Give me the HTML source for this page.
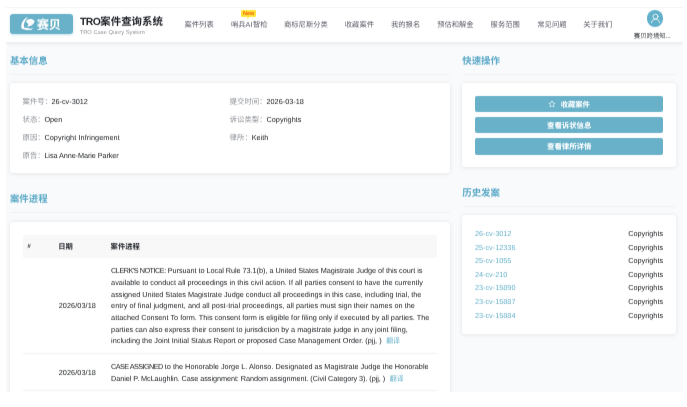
<!DOCTYPE html>
<html lang="zh-CN"><head><meta charset="utf-8"><title>TRO案件查询系统</title>
<style>
html,body{margin:0;padding:0;background:#fff;}
body{text-rendering:geometricPrecision;width:687px;height:407px;position:relative;overflow:hidden;font-family:"Liberation Sans","Noto Sans CJK SC",sans-serif;}
#app{position:absolute;left:6px;top:7px;width:677px;height:385px;overflow:hidden;background:#f9fafc}
#g{position:absolute;left:-6px;top:-7px;width:687px;height:407px;will-change:transform;filter:url(#soft)}
#g>div,#g>svg{position:absolute}
.t{white-space:pre}
.cj{display:inline-block;position:relative;vertical-align:baseline;line-height:1;white-space:nowrap;font-family:"Liberation Sans","Noto Sans CJK SC",sans-serif}
.b{font-weight:bold}
</style></head><body>
<svg width="0" height="0" style="position:absolute;left:0;top:0"><defs><filter id="soft" x="0" y="0" width="100%" height="100%" color-interpolation-filters="sRGB"><feConvolveMatrix order="1 3" kernelMatrix="0.11 0.78 0.11" edgeMode="duplicate" preserveAlpha="false"/></filter></defs></svg>
<div id="app"><div id="g">
<div style="left:6px;top:7px;width:677px;height:34.5px;background:#fff;box-shadow:0 1px 4px rgba(0,21,41,.10);"></div>
<div style="left:6px;top:7px;width:677px;height:1px;background:#f3f4f5"></div>
<div style="left:10.3px;top:13.8px;width:63px;height:20.7px;background:#68b1c9;border-radius:3.2px;box-shadow:0 1px 3px rgba(104,177,201,.35)"></div>
<svg style="left:21.4px;top:16.7px" width="13.6" height="13.8" viewBox="0 0 136 138"><g fill="#fff"><path d="M72 0C40 8 8 44 3 84c-2 16 2 28 10 36l26-6C27 100 25 80 33 60 41 38 55 16 72 0z"/><path d="M50 42c18-28 62-30 86-2-6 34-40 58-78 54 11-7 16-17 14-30-9-2-17-10-22-22z"/><path d="M1 114c28-12 58-8 82 0 14 5 26 3 35-6-3 20-26 32-52 26-22-5-42-16-65-20z"/></g></svg>
<div class="t" style="top:14.85px;font-size:12.2px;line-height:20px;height:20px;color:#fff;left:36.7px;"><span class="cj b" style="width:25.00px;height:12.2px;font-size:12.2px">赛贝</span></div>
<div class="t" style="top:16.00px;font-size:10.45px;line-height:14px;height:14px;color:#1f2329;font-weight:bold;left:80.1px;"><span style="letter-spacing:-0.62px">TRO</span><span class="cj b" style="width:63.00px;height:10.45px;font-size:10.45px">案件查询系统</span></div>
<div class="t" style="top:29.00px;font-size:5.75px;line-height:8px;height:8px;color:#8f9399;left:79.7px;">TRO Case Query System</div>
<div class="t" style="top:19.30px;font-size:7.3px;line-height:12px;height:12px;color:#5a5e66;left:184.5px;"><span class="cj" style="width:29.20px;height:7.3px;font-size:7.3px">案件列表</span></div>
<div class="t" style="top:19.30px;font-size:7.3px;line-height:12px;height:12px;color:#5a5e66;left:230.9px;"><span class="cj" style="width:14.60px;height:7.3px;font-size:7.3px">哨兵</span><span style="letter-spacing:.25px">AI</span><span class="cj" style="width:14.60px;height:7.3px;font-size:7.3px">智检</span></div>
<div class="t" style="top:19.30px;font-size:7.3px;line-height:12px;height:12px;color:#5a5e66;left:284px;"><span class="cj" style="width:43.80px;height:7.3px;font-size:7.3px">商标尼斯分类</span></div>
<div class="t" style="top:19.30px;font-size:7.3px;line-height:12px;height:12px;color:#5a5e66;left:344.8px;"><span class="cj" style="width:29.20px;height:7.3px;font-size:7.3px">收藏案件</span></div>
<div class="t" style="top:19.30px;font-size:7.3px;line-height:12px;height:12px;color:#5a5e66;left:391px;"><span class="cj" style="width:29.20px;height:7.3px;font-size:7.3px">我的报名</span></div>
<div class="t" style="top:19.30px;font-size:7.3px;line-height:12px;height:12px;color:#5a5e66;left:437.2px;"><span class="cj" style="width:36.50px;height:7.3px;font-size:7.3px">预估和解金</span></div>
<div class="t" style="top:19.30px;font-size:7.3px;line-height:12px;height:12px;color:#5a5e66;left:490.6px;"><span class="cj" style="width:29.20px;height:7.3px;font-size:7.3px">服务范围</span></div>
<div class="t" style="top:19.30px;font-size:7.3px;line-height:12px;height:12px;color:#5a5e66;left:537.3px;"><span class="cj" style="width:29.20px;height:7.3px;font-size:7.3px">常见问题</span></div>
<div class="t" style="top:19.30px;font-size:7.3px;line-height:12px;height:12px;color:#5a5e66;left:583.2px;"><span class="cj" style="width:29.20px;height:7.3px;font-size:7.3px">关于我们</span></div>
<div style="left:241px;top:10px;width:15.3px;height:7.3px;background:#ffe53b;border-radius:1px"></div>
<div style="left:246.6px;top:17px;width:0;height:0;border-left:1.8px solid transparent;border-right:1.8px solid transparent;border-top:2.2px solid #ffe53b"></div>
<div class="t" style="top:10.00px;font-size:5.6px;line-height:8px;height:8px;color:#f4620c;font-weight:bold;left:98.69999999999999px;width:300px;text-align:center;">New</div>
<div style="left:646.6px;top:10.1px;width:16.9px;height:16.9px;border-radius:50%;background:#62b0ca"></div>
<svg style="left:646.6px;top:10.1px" width="16.9" height="16.9" viewBox="0 0 169 169"><g fill="none" stroke="#fff" stroke-width="8" stroke-linecap="round"><circle cx="85" cy="66" r="25"/><path d="M44 128c4-24 20-37 41-37s37 13 41 37"/></g></svg>
<div class="t" style="top:31.60px;font-size:6.4px;line-height:9px;height:9px;color:#3a3d42;left:633.8px;"><span class="cj" style="width:32.00px;height:6.4px;font-size:6.4px">赛贝跨境知</span><span style="letter-spacing:-0.2px">...</span></div>
<div class="t" style="top:54.24px;font-size:9.45px;line-height:15px;height:15px;color:#5fabc8;left:9.9px;"><span class="cj b" style="width:37.80px;height:9.45px;font-size:9.45px">基本信息</span></div>
<div class="t" style="top:54.24px;font-size:9.45px;line-height:15px;height:15px;color:#5fabc8;left:462.2px;"><span class="cj b" style="width:37.80px;height:9.45px;font-size:9.45px">快速操作</span></div>
<div style="left:10px;top:73.6px;width:439.5px;height:1px;background:#eef1f4"></div>
<div style="left:462.5px;top:73.6px;width:213.3px;height:1px;background:#eef1f4"></div>
<div style="left:10.2px;top:83.0px;width:439.6px;height:89.9px;background:#fff;border-radius:3px;box-shadow:0 .7px 4.2px rgba(0,0,0,.085);"></div>
<div style="left:462.2px;top:83.1px;width:213.7px;height:83.7px;background:#fff;border-radius:3px;box-shadow:0 .7px 4.2px rgba(0,0,0,.085);"></div>
<div class="t" style="top:96.35px;font-size:7.4px;line-height:12px;height:12px;color:#8f9399;left:22.5px;"><span class="cj" style="width:29.60px;height:7.4px;font-size:7.4px">案件号：</span></div>
<div class="t" style="top:96.00px;font-size:7.3px;line-height:12px;height:12px;color:#202327;left:51.4px;">26-cv-3012</div>
<div class="t" style="top:114.35px;font-size:7.4px;line-height:12px;height:12px;color:#8f9399;left:22.5px;"><span class="cj" style="width:22.20px;height:7.4px;font-size:7.4px">状态：</span></div>
<div class="t" style="top:114.00px;font-size:7.3px;line-height:12px;height:12px;color:#202327;left:44.4px;">Open</div>
<div class="t" style="top:132.35px;font-size:7.4px;line-height:12px;height:12px;color:#8f9399;left:22.5px;"><span class="cj" style="width:22.20px;height:7.4px;font-size:7.4px">原因：</span></div>
<div class="t" style="top:132.00px;font-size:7.3px;line-height:12px;height:12px;color:#202327;letter-spacing:0.075px;left:44.4px;">Copyright Infringement</div>
<div class="t" style="top:150.35px;font-size:7.4px;line-height:12px;height:12px;color:#8f9399;left:22.5px;"><span class="cj" style="width:22.20px;height:7.4px;font-size:7.4px">原告：</span></div>
<div class="t" style="top:150.00px;font-size:7.3px;line-height:12px;height:12px;color:#202327;letter-spacing:-0.09px;left:44.4px;">Lisa Anne-Marie Parker</div>
<div class="t" style="top:96.35px;font-size:7.4px;line-height:12px;height:12px;color:#8f9399;left:229.6px;"><span class="cj" style="width:37.00px;height:7.4px;font-size:7.4px">提交时间：</span></div>
<div class="t" style="top:96.00px;font-size:7.3px;line-height:12px;height:12px;color:#202327;left:266.5px;">2026-03-18</div>
<div class="t" style="top:114.35px;font-size:7.4px;line-height:12px;height:12px;color:#8f9399;left:229.6px;"><span class="cj" style="width:37.00px;height:7.4px;font-size:7.4px">诉讼类型：</span></div>
<div class="t" style="top:114.00px;font-size:7.3px;line-height:12px;height:12px;color:#202327;left:266.5px;">Copyrights</div>
<div class="t" style="top:132.35px;font-size:7.4px;line-height:12px;height:12px;color:#8f9399;left:229.6px;"><span class="cj" style="width:22.20px;height:7.4px;font-size:7.4px">律所：</span></div>
<div class="t" style="top:132.00px;font-size:7.3px;line-height:12px;height:12px;color:#202327;left:251.7px;">Keith</div>
<div style="left:475px;top:95.6px;width:188px;height:16.7px;background:#68b1c9;border-radius:2px"></div>
<svg style="left:547.7px;top:99.89999999999999px" width="8" height="8" viewBox="0 0 24 24"><path d="M12 2.8l2.9 6 6.5.9-4.7 4.6 1.1 6.5L12 17.7l-5.8 3.1 1.1-6.5L2.6 9.7l6.5-.9z" fill="none" stroke="#fff" stroke-width="1.9" stroke-linejoin="round"/></svg>
<div class="t" style="top:98.94px;font-size:7.25px;line-height:12px;height:12px;color:#fff;left:560.8px;"><span class="cj b" style="width:29.00px;height:7.25px;font-size:7.25px">收藏案件</span></div>
<div style="left:475px;top:116.8px;width:188px;height:16.7px;background:#68b1c9;border-radius:2px"></div>
<div class="t" style="top:120.20px;font-size:7.4px;line-height:12px;height:12px;color:#fff;left:419.20000000000005px;width:300px;text-align:center;"><span class="cj b" style="width:44.40px;height:7.4px;font-size:7.4px">查看诉状信息</span></div>
<div style="left:475px;top:137.9px;width:188px;height:16.7px;background:#68b1c9;border-radius:2px"></div>
<div class="t" style="top:141.30px;font-size:7.4px;line-height:12px;height:12px;color:#fff;left:419.20000000000005px;width:300px;text-align:center;"><span class="cj b" style="width:44.40px;height:7.4px;font-size:7.4px">查看律所详情</span></div>
<div class="t" style="top:191.84px;font-size:9.45px;line-height:15px;height:15px;color:#5fabc8;left:9.9px;"><span class="cj b" style="width:37.80px;height:9.45px;font-size:9.45px">案件进程</span></div>
<div style="left:10px;top:212px;width:439.5px;height:1px;background:#eef1f4"></div>
<div style="left:10.2px;top:222px;width:439.6px;height:200px;background:#fff;border-radius:3px;box-shadow:0 .7px 4.2px rgba(0,0,0,.085);"></div>
<div style="left:23.2px;top:234.8px;width:413.8px;height:23.6px;background:#f8f8f9"></div>
<div class="t" style="top:242.00px;font-size:6.3px;line-height:10px;height:10px;color:#2a2d33;font-weight:bold;left:27.2px;font-style:italic;">#</div>
<div class="t" style="top:240.91px;font-size:7.3px;line-height:12px;height:12px;color:#2a2d33;left:58.2px;"><span class="cj b" style="width:14.60px;height:7.3px;font-size:7.3px">日期</span></div>
<div class="t" style="top:240.91px;font-size:7.3px;line-height:12px;height:12px;color:#2a2d33;left:110.6px;"><span class="cj b" style="width:29.60px;height:7.3px;font-size:7.3px">案件进程</span></div>
<div class="t" style="top:265.00px;font-size:7.3px;line-height:11px;height:11px;color:#202327;left:111.1px;"><span style="letter-spacing:-0.508px">CLERK&#39;S NOTICE:</span><span style="letter-spacing:-0.041px"> Pursuant to Local Rule 73.1(b), a United States Magistrate Judge of this court is</span></div>
<div class="t" style="top:277.00px;font-size:7.3px;line-height:11px;height:11px;color:#202327;left:111.1px;"><span style="letter-spacing:0.022px">available to conduct all proceedings in this civil action. If all parties consent to have the currently</span></div>
<div class="t" style="top:289.00px;font-size:7.3px;line-height:11px;height:11px;color:#202327;left:111.1px;"><span style="letter-spacing:-0.009px">assigned United States Magistrate Judge conduct all proceedings in this case, including trial, the</span></div>
<div class="t" style="top:300.00px;font-size:7.3px;line-height:11px;height:11px;color:#202327;left:111.1px;"><span style="letter-spacing:0.038px">entry of final judgment, and all post-trial proceedings, all parties must sign their names on the</span></div>
<div class="t" style="top:312.00px;font-size:7.3px;line-height:11px;height:11px;color:#202327;left:111.1px;"><span style="letter-spacing:0.011px">attached Consent To form. This consent form is eligible for filing only if executed by all parties. The</span></div>
<div class="t" style="top:324.00px;font-size:7.3px;line-height:11px;height:11px;color:#202327;left:111.1px;"><span style="letter-spacing:0.019px">parties can also express their consent to jurisdiction by a magistrate judge in any joint filing,</span></div>
<div class="t" style="top:335.00px;font-size:7.3px;line-height:11px;height:11px;color:#202327;left:111.1px;"><span style="letter-spacing:0.014px">including the Joint Initial Status Report or proposed Case Management Order. (pjj, )</span><span style="display:inline-block;width:4.59px"></span><span class="cj" style="width:13.80px;height:6.9px;font-size:6.9px;color:#6ab3cb">翻译</span></div>
<div class="t" style="top:361.00px;font-size:7.3px;line-height:11px;height:11px;color:#202327;left:111.1px;"><span style="letter-spacing:-0.586px">CASE ASSIGNED</span><span style="letter-spacing:0.013px"> to the Honorable Jorge L. Alonso. Designated as Magistrate Judge the Honorable</span></div>
<div class="t" style="top:373.00px;font-size:7.3px;line-height:11px;height:11px;color:#202327;left:111.1px;"><span style="letter-spacing:-0.073px">Daniel P. McLaughlin. Case assignment: Random assignment. (Civil Category 3). (pjj, )</span><span style="display:inline-block;width:4.87px"></span><span class="cj" style="width:13.80px;height:6.9px;font-size:6.9px;color:#6ab3cb">翻译</span></div>
<div class="t" style="top:300.00px;font-size:7.3px;line-height:11px;height:11px;color:#202327;letter-spacing:0.07px;left:58.7px;">2026/03/18</div>
<div class="t" style="top:367.00px;font-size:7.3px;line-height:11px;height:11px;color:#202327;letter-spacing:0.07px;left:58.7px;">2026/03/18</div>
<div style="left:23.2px;top:353.1px;width:413.8px;height:1px;background:#eff1f3"></div>
<div style="left:23.2px;top:390.1px;width:413.8px;height:1px;background:#eff1f3"></div>
<div class="t" style="top:185.54px;font-size:9.45px;line-height:15px;height:15px;color:#5fabc8;left:462.2px;"><span class="cj b" style="width:37.80px;height:9.45px;font-size:9.45px">历史发案</span></div>
<div style="left:462.5px;top:205.5px;width:213.3px;height:1px;background:#eef1f4"></div>
<div style="left:462.2px;top:215.0px;width:213.7px;height:118.7px;background:#fff;border-radius:3px;box-shadow:0 .7px 4.2px rgba(0,0,0,.085);"></div>
<div class="t" style="top:228.00px;font-size:7.3px;line-height:11px;height:11px;color:#6ab3cb;left:474.9px;">26-cv-3012</div>
<div class="t" style="top:228.00px;font-size:7.3px;line-height:11px;height:11px;color:#202327;right:23.90px;text-align:right;">Copyrights</div>
<div class="t" style="top:242.00px;font-size:7.3px;line-height:11px;height:11px;color:#6ab3cb;left:474.9px;">25-cv-12336</div>
<div class="t" style="top:242.00px;font-size:7.3px;line-height:11px;height:11px;color:#202327;right:23.90px;text-align:right;">Copyrights</div>
<div class="t" style="top:255.00px;font-size:7.3px;line-height:11px;height:11px;color:#6ab3cb;left:474.9px;">25-cv-1055</div>
<div class="t" style="top:255.00px;font-size:7.3px;line-height:11px;height:11px;color:#202327;right:23.90px;text-align:right;">Copyrights</div>
<div class="t" style="top:269.00px;font-size:7.3px;line-height:11px;height:11px;color:#6ab3cb;left:474.9px;">24-cv-210</div>
<div class="t" style="top:269.00px;font-size:7.3px;line-height:11px;height:11px;color:#202327;right:23.90px;text-align:right;">Copyrights</div>
<div class="t" style="top:282.00px;font-size:7.3px;line-height:11px;height:11px;color:#6ab3cb;left:474.9px;">23-cv-15890</div>
<div class="t" style="top:282.00px;font-size:7.3px;line-height:11px;height:11px;color:#202327;right:23.90px;text-align:right;">Copyrights</div>
<div class="t" style="top:296.00px;font-size:7.3px;line-height:11px;height:11px;color:#6ab3cb;left:474.9px;">23-cv-15887</div>
<div class="t" style="top:296.00px;font-size:7.3px;line-height:11px;height:11px;color:#202327;right:23.90px;text-align:right;">Copyrights</div>
<div class="t" style="top:310.00px;font-size:7.3px;line-height:11px;height:11px;color:#6ab3cb;left:474.9px;">23-cv-15884</div>
<div class="t" style="top:310.00px;font-size:7.3px;line-height:11px;height:11px;color:#202327;right:23.90px;text-align:right;">Copyrights</div>
</div></div>
</body></html>
